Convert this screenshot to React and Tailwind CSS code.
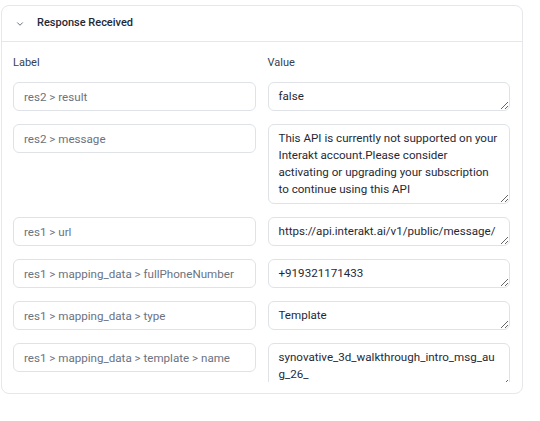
import { ChevronDown } from 'lucide-react';

const rows = [
    { label: 'res2 > result', value: 'false', lines: 1 },
    { label: 'res2 > message', value: 'This API is currently not supported on your Interakt account.Please consider activating or upgrading your subscription to continue using this API', lines: 4 },
    { label: 'res1 > url', value: 'https://api.interakt.ai/v1/public/message/', lines: 1 },
    { label: 'res1 > mapping_data > fullPhoneNumber', value: '+919321171433', lines: 1 },
    { label: 'res1 > mapping_data > type', value: 'Template', lines: 1 },
    { label: 'res1 > mapping_data > template > name', value: 'synovative_3d_walkthrough_intro_msg_aug_26_', lines: 2 },
];

export default function App() {
    return (
        <div className="min-h-screen bg-white pt-[5px] pl-px font-['Roboto',sans-serif]">
            <div className="w-[522px] border border-[#e5e7eb] rounded-lg bg-white">
                <div className="h-[36px] border-b border-[#e5e7eb] flex items-center pl-[13px]">
                    <ChevronDown className="w-[10px] h-[10px] text-[#4b5563]" strokeWidth={2} />
                    <span className="ml-[12px] text-[11px] font-medium text-[#1f2937]">Response Received</span>
                </div>

                <div className="h-[340px] overflow-hidden pl-[11px] pr-[12px] pt-3">
                    <div className="grid grid-cols-2 gap-x-3 mb-[11px] text-[11px] leading-[17px] text-[#374151]">
                        <span>Label</span>
                        <span>Value</span>
                    </div>
                    <div className="grid grid-cols-2 gap-x-3 gap-y-[13px] items-start">
                        {rows.map((r) => (
                            <div key={r.label} className="contents">
                                <input
                                    type="text"
                                    readOnly
                                    value={r.label}
                                    className="w-full h-[29px] px-[10px] border border-[#dfe2e6] rounded-md text-[11.6px] text-[#6b7280] bg-white outline-none"
                                />
                                <textarea
                                    readOnly
                                    rows={r.lines}
                                    value={r.value}
                                    className="w-full block px-[10px] py-[5px] border border-[#dfe2e6] rounded-md text-[11.6px] leading-[17px] text-[#1f2937] bg-white outline-none overflow-hidden"
                                />
                            </div>
                        ))}
                    </div>
                </div>
                <div className="h-[11px]" />
            </div>
        </div>
    );
}
